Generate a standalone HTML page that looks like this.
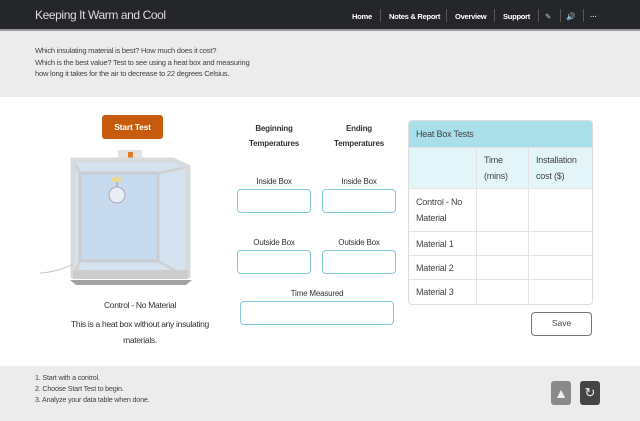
<!DOCTYPE html>
<html><head><style>
*{box-sizing:border-box;margin:0;padding:0}
body{width:640px;height:421px;overflow:hidden;background:#fff;font-family:"Liberation Sans",sans-serif;position:relative;color:#333}
.hdr{position:absolute;left:0;top:0;width:640px;height:31px;background:#24262a;border-bottom:2px solid #999}
.title{position:absolute;left:35px;top:8px;color:#ddd;font-size:12px;letter-spacing:-0.4px}
.nav{position:absolute;top:12px;font-size:7.6px;color:#fff;font-weight:bold;letter-spacing:-0.3px}
.sep{position:absolute;top:9px;width:1px;height:13px;background:#555}
.intro{position:absolute;left:0;top:31px;width:640px;height:66px;background:#ececec;font-size:7.6px;line-height:11.5px;color:#444;padding:14px 0 0 35px;letter-spacing:-0.25px}
.btn{position:absolute;left:102px;top:115px;width:61px;height:24px;background:#c65a0d;border-radius:3px;color:#fff;font-size:8.5px;font-weight:bold;text-align:center;line-height:24px;letter-spacing:-0.2px}
.cap{position:absolute;left:40px;width:200px;text-align:center;font-size:8.5px;color:#333;letter-spacing:-0.3px}
.lbl{position:absolute;font-size:8px;text-align:center;color:#333;letter-spacing:-0.2px}
.h{font-weight:bold;line-height:15px}
.in{position:absolute;border:1.5px solid #7fc9da;border-radius:4px;background:#fff}
table{position:absolute;left:408px;top:120px;width:185px;border-collapse:separate;border-spacing:0;border:1px solid #ddd;border-radius:4px;overflow:hidden;font-size:9px;color:#444;letter-spacing:-0.2px}
td{border-right:1px solid #e3e3e3;border-bottom:1px solid #e3e3e3;padding:0 7px;vertical-align:middle;line-height:16px}
td:last-child{border-right:none}
tr:last-child td{border-bottom:none}
.save{position:absolute;left:531px;top:312px;width:61px;height:24px;border:1.5px solid #777;border-radius:4px;text-align:center;line-height:21px;font-size:8.5px;color:#444}
.ftr{position:absolute;left:0;top:366px;width:640px;height:55px;background:#ececec;font-size:7.2px;line-height:11px;color:#444;padding:6px 0 0 35px;letter-spacing:-0.2px}
</style></head><body>
<div class="hdr">
<div class="title">Keeping It Warm and Cool</div>
<div class="nav" style="left:352px">Home</div><div class="sep" style="left:380px"></div>
<div class="nav" style="left:389px">Notes &amp; Report</div><div class="sep" style="left:446px"></div>
<div class="nav" style="left:455px">Overview</div><div class="sep" style="left:494px"></div>
<div class="nav" style="left:503px">Support</div><div class="sep" style="left:538px"></div>
<div class="nav" style="left:545px;font-weight:normal;color:#ccc">&#9998;</div><div class="sep" style="left:560px"></div>
<div class="nav" style="left:566px">&#128266;</div><div class="sep" style="left:583px"></div>
<div class="nav" style="left:590px;color:#ccc">&middot;&middot;&middot;</div>
</div>
<div class="intro">Which insulating material is best? How much does it cost?<br>Which is the best value? Test to see using a heat box and measuring<br>how long it takes for the air to decrease to 22 degrees Celsius.</div>

<div class="btn">Start Test</div>
<svg style="position:absolute;left:40px;top:145px" width="160" height="140" viewBox="0 0 160 140">
<rect x="78" y="5" width="24" height="12" fill="#e2e2e2"/><rect x="88" y="7" width="5" height="9" fill="#e07a2a"/>
<polygon points="33,15 133,15 148,22 148,133 33,133" fill="#d5e3f1"/>
<rect x="40" y="28" width="78" height="88" fill="#c8dbee" stroke="#c9cdd1" stroke-width="3"/>
<line x1="33" y1="15" x2="40" y2="28" stroke="#d0d2d4" stroke-width="3"/>
<line x1="148" y1="22" x2="118" y2="28" stroke="#d0d2d4" stroke-width="3"/>
<line x1="148" y1="133" x2="118" y2="116" stroke="#d0d2d4" stroke-width="3"/>
<line x1="33" y1="133" x2="40" y2="116" stroke="#d0d2d4" stroke-width="3"/>
<polyline points="33,133 33,15 133,15 148,22 148,133" fill="none" stroke="#d8dadc" stroke-width="5"/>
<rect x="33" y="125" width="115" height="9" fill="#cbcdcf"/>
<path d="M30 135 L152 135 L146 140 L36 140Z" fill="#555" opacity=".55"/>
<rect x="72" y="32" width="10" height="5" fill="#e9d79a"/><line x1="77" y1="37" x2="77" y2="44" stroke="#999"/>
<circle cx="77" cy="50" r="8" fill="#e8eef4" stroke="#aab" stroke-width="1"/>
<path d="M0 128 Q18 127 33 119" stroke="#ccc" fill="none"/>
</svg>
<div class="cap" style="top:300px">Control - No Material</div>
<div class="cap" style="top:316px;line-height:16px;padding:0 15px">This is a heat box without any insulating materials.</div>

<div class="lbl h" style="left:237px;top:121px;width:74px">Beginning<br>Temperatures</div>
<div class="lbl h" style="left:322px;top:121px;width:74px">Ending<br>Temperatures</div>
<div class="lbl" style="left:237px;top:177px;width:74px">Inside Box</div>
<div class="lbl" style="left:322px;top:177px;width:74px">Inside Box</div>
<div class="in" style="left:237px;top:189px;width:74px;height:24px"></div>
<div class="in" style="left:322px;top:189px;width:74px;height:24px"></div>
<div class="lbl" style="left:237px;top:238px;width:74px">Outside Box</div>
<div class="lbl" style="left:322px;top:238px;width:74px">Outside Box</div>
<div class="in" style="left:237px;top:250px;width:74px;height:24px"></div>
<div class="in" style="left:322px;top:250px;width:74px;height:24px"></div>
<div class="lbl" style="left:240px;top:289px;width:154px">Time Measured</div>
<div class="in" style="left:240px;top:301px;width:154px;height:24px"></div>

<table>
<tr style="background:#a8dfe9;height:27px"><td colspan="3" style="border-right:none">Heat Box Tests</td></tr>
<tr style="background:#e4f5f9;height:41px"><td style="width:68px"></td><td style="width:52px">Time (mins)</td><td>Installation cost ($)</td></tr>
<tr style="height:43px"><td>Control - No Material</td><td></td><td></td></tr>
<tr style="height:24px"><td>Material 1</td><td></td><td></td></tr>
<tr style="height:24px"><td>Material 2</td><td></td><td></td></tr>
<tr style="height:24px"><td>Material 3</td><td></td><td></td></tr>
</table>
<div class="save">Save</div>

<div class="ftr">1. Start with a control.<br>2. Choose Start Test to begin.<br>3. Analyze your data table when done.</div>
<div style="position:absolute;left:551px;top:381px;width:20px;height:24px;background:#8a8a8a;border-radius:3px;color:#eee;font-size:14px;text-align:center;line-height:24px">&#9650;</div>
<div style="position:absolute;left:580px;top:381px;width:20px;height:24px;background:#444;border-radius:3px;color:#eee;font-size:13px;text-align:center;line-height:24px">&#8635;</div>
</body></html>
